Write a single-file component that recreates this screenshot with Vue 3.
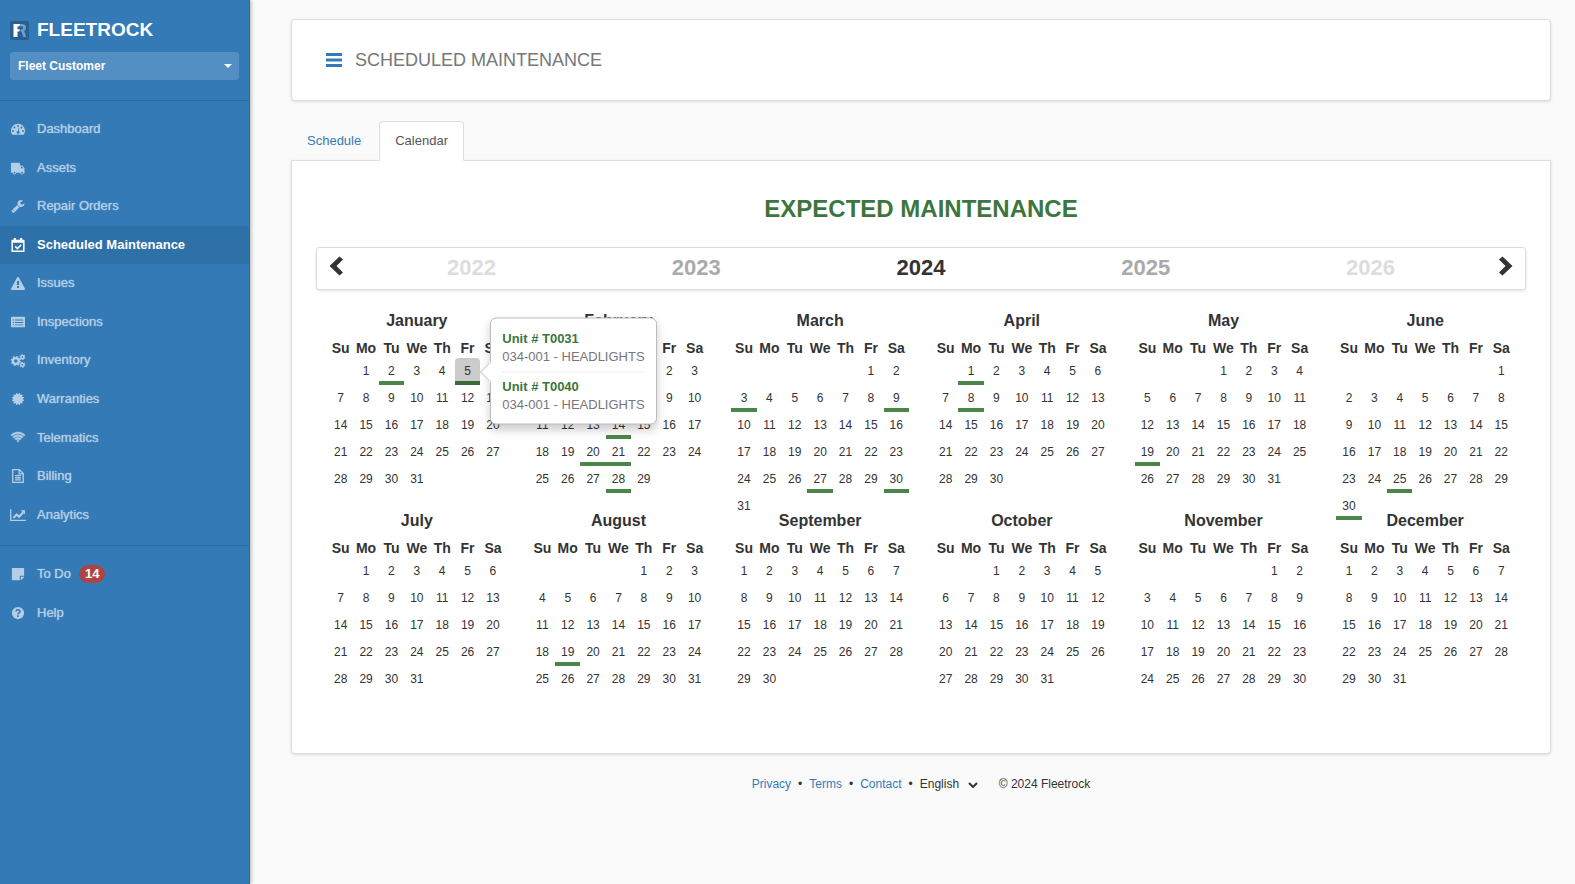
<template>
  <div class="app">
    <aside class="sidebar">
      <div class="brand">
        <svg class="logo" viewBox="0 0 19 19" aria-hidden="true">
          <rect width="19" height="19" rx="2" fill="#29608f" />
          <path d="M9 3h3q4 0 4 3.700 0 2.300-1.800 3.200l2 6.100h-2.900l-1.800-5.500h-1v-2h1q1.500 0 1.500-1.600t-1.500-1.600h-2.500z" fill="#6ba0d0" />
          <path d="M3.500 3h6.500l-1 2.500h-1.500v2.700h2.500l-.8 2.300h-1.700v5.500h-4z" fill="#fff" />
        </svg>
        <span>FLEETROCK</span>
      </div>
      <div class="customer">
        <select v-model="customer" aria-label="Customer">
          <option>Fleet Customer</option>
        </select>
        <svg class="caret" viewBox="0 0 8 4" aria-hidden="true"><path d="M0 0h8l-4 4z" fill="#fff" /></svg>
      </div>

      <nav v-for="(group, i) in menu" :key="i" class="menu">
        <a
          v-for="item in group"
          :key="item.label"
          href="#"
          :class="{ active: item.active }"
        >
          <svg class="icon" viewBox="0 0 16 16" aria-hidden="true" v-html="icons[item.icon]"></svg>
          <span>{{ item.label }}</span>
          <span v-if="item.badge" class="badge">{{ item.badge }}</span>
        </a>
      </nav>
    </aside>

    <main class="content">
      <header class="page-header">
        <button class="toggle" aria-label="Toggle menu">
          <svg viewBox="0 0 16 14" aria-hidden="true"><path d="M0 0h16v3h-16zM0 5.500h16v3h-16zM0 11h16v3h-16z" fill="#337ab7" /></svg>
        </button>
        <h1>SCHEDULED MAINTENANCE</h1>
      </header>

      <div class="tabs">
        <a href="#">Schedule</a>
        <a href="#" class="active">Calendar</a>
      </div>

      <section class="panel">
        <h2>EXPECTED MAINTENANCE</h2>

        <div class="years">
          <button class="arrow" aria-label="Previous year" @click="year--">
            <svg viewBox="0 0 14 20" aria-hidden="true"><path d="M10.500 0.500l3.500 3-6.500 6.500 6.500 6.500-3.500 3-10-9.500z" fill="#333" /></svg>
          </button>
          <button
            v-for="y in years"
            :key="y"
            class="year"
            :class="'away-' + Math.abs(y - year)"
            @click="year = y"
          >{{ y }}</button>
          <button class="arrow next" aria-label="Next year" @click="year++">
            <svg viewBox="0 0 14 20" aria-hidden="true"><path d="M3.500 0.500l-3.500 3 6.500 6.500-6.500 6.500 3.500 3 10-9.500z" fill="#333" /></svg>
          </button>
        </div>

        <div class="months">
          <div v-for="month in months" :key="month.name" class="month">
            <h3>{{ month.name }}</h3>
            <table>
              <thead>
                <tr>
                  <th v-for="d in weekdays" :key="d">{{ d }}</th>
                </tr>
              </thead>
              <tbody>
                <tr v-for="(week, w) in month.weeks" :key="w">
                  <td
                    v-for="(day, d) in week"
                    :key="d"
                    :class="{ due: day.due, selected: day.open }"
                  >
                    {{ day.date }}
                    <div v-if="day.open" class="popover">
                      <div v-for="u in units" :key="u.unit" class="unit">
                        <strong>Unit # {{ u.unit }}</strong>
                        <span>{{ u.task }}</span>
                      </div>
                    </div>
                  </td>
                </tr>
              </tbody>
            </table>
          </div>
        </div>
      </section>

      <footer class="footer">
        <a href="#">Privacy</a>
        <span>•</span>
        <a href="#">Terms</a>
        <span>•</span>
        <a href="#">Contact</a>
        <span>•</span>
        <div class="language">
          <select v-model="language" aria-label="Language">
            <option>English</option>
          </select>
          <svg viewBox="0 0 10 6" aria-hidden="true"><path d="M1 1l4 4 4-4" fill="none" stroke="#333" stroke-width="2" /></svg>
        </div>
        <span class="copyright">© 2024 Fleetrock</span>
      </footer>
    </main>
  </div>
</template>

<script setup>
import { ref, computed } from 'vue'

const customer = ref('Fleet Customer')
const language = ref('English')
const year = ref(2024)

const menu = [
  [
    { label: 'Dashboard', icon: 'dashboard' },
    { label: 'Assets', icon: 'truck' },
    { label: 'Repair Orders', icon: 'wrench' },
    { label: 'Scheduled Maintenance', icon: 'calendar', active: true },
    { label: 'Issues', icon: 'warning' },
    { label: 'Inspections', icon: 'list' },
    { label: 'Inventory', icon: 'cogs' },
    { label: 'Warranties', icon: 'certificate' },
    { label: 'Telematics', icon: 'wifi' },
    { label: 'Billing', icon: 'file' },
    { label: 'Analytics', icon: 'chart' }
  ],
  [
    { label: 'To Do', icon: 'note', badge: 14 },
    { label: 'Help', icon: 'help' }
  ]
]

const icons = {
  dashboard: '<path fill="currentColor" fill-rule="evenodd" d="M8 2a8 8 0 0 0-8 8q0 2.400 1.300 4.300.2.300.5.300h12.400q.3 0 .5-.3Q16 12.400 16 10a8 8 0 0 0-8-8zM2.300 9.100a1.100 1.100 0 1 1 0 2.200 1.100 1.100 0 0 1 0-2.200zM4 5.100a1.100 1.100 0 1 1 0 2.200 1.100 1.100 0 0 1 0-2.200zM8 3.400a1.100 1.100 0 1 1 0 2.200 1.100 1.100 0 0 1 0-2.200zM12 5.100a1.100 1.100 0 1 1 0 2.200 1.100 1.100 0 0 1 0-2.200zM13.700 9.100a1.100 1.100 0 1 1 0 2.200 1.100 1.100 0 0 1 0-2.200zM9 6.500l.8.200-.9 3.700a1.700 1.700 0 1 1-1-.2z"/>',
  truck: '<path fill="currentColor" fill-rule="evenodd" d="M.5 2h9.300q.5 0 .5.500v2.500h2q.4 0 .7.300l2.100 2.300q.3.300.3.700v4.200h.4v1h-1.300a2 2 0 0 1-4 0H6a2 2 0 0 1-4 0H0V2.500Q0 2 .5 2zM11.300 6.200v2.200h2.800v-.2l-1.900-2zM4 12.400a1 1 0 1 0 0 2 1 1 0 0 0 0-2zM12.500 12.400a1 1 0 1 0 0 2 1 1 0 0 0 0-2z"/>',
  wrench: '<g transform="scale(.00893)"><path fill="currentColor" d="M448 1472q0-26-19-45t-45-19-45 19-19 45 19 45 45 19 45-19 19-45zm644-420l-682 682q-37 37-90 37-52 0-91-37l-106-108q-38-36-38-90 0-53 38-91l681-681q39 98 114.500 173.500t173.500 114.500zm634-435q0 39-23 106-47 134-164.500 217.500t-258.500 83.500q-185 0-316.500-131.500t-131.500-316.500 131.500-316.500 316.500-131.500q58 0 121.500 16.500t107.500 46.500q16 11 16 28t-16 28l-293 169v224l193 107q5-3 79-48.500t135.500-81 70.500-35.500q15 0 23.500 10t8.500 25z"/></g>',
  calendar: '<path fill="currentColor" fill-rule="evenodd" d="M1.500 2H3V1q0-1 1-1h.8q1 0 1 1v1h4.400V1q0-1 1-1h.8q1 0 1 1v1h1.500q1 0 1 1v12q0 1-1 1h-13q-1 0-1-1V3q0-1 1-1zM2.200 5.500v8.900h11.600V5.500z"/><path d="M4.800 9.600l2.500 2.500 4.200-4.200" fill="none" stroke="currentColor" stroke-width="1.800"/>',
  warning: '<g transform="scale(.00893)"><path fill="currentColor" d="M1024 1375v-190q0-14-9.500-23.500t-22.500-9.500h-192q-13 0-22.500 9.500t-9.500 23.500v190q0 14 9.500 23.500t22.500 9.500h192q13 0 22.500-9.500t9.500-23.500zm-2-374l18-459q0-12-10-19-13-11-24-11h-220q-11 0-24 11-10 7-10 21l17 457q0 10 10 16.500t24 6.500h185q14 0 23.500-6.500t10.500-16.500zm-14-934l768 1408q35 63-2 126-17 29-46.500 46t-63.500 17h-1536q-34 0-63.500-17t-46.500-46q-37-63-2-126l768-1408q17-31 47-49t65-18 65 18 47 49z"/></g>',
  list: '<path fill="currentColor" fill-rule="evenodd" d="M1 2h14q1 0 1 1v10q0 1-1 1H1q-1 0-1-1V3q0-1 1-1zM2 5.200v1h1.500v-1zM4.500 5.200v1H14v-1zM2 8v1h1.500V8zM4.500 8v1H14V8zM2 10.800v1h1.500v-1zM4.500 10.800v1H14v-1z"/>',
  cogs: '<g fill="none" stroke="currentColor"><circle cx="5.500" cy="8" r="3.300" stroke-width="2.800"/><circle cx="5.500" cy="8" r="5" stroke-width="1.600" stroke-dasharray="1.960 1.967"/><circle cx="13" cy="3.600" r="1.800" stroke-width="1.700"/><circle cx="13" cy="3.600" r="2.800" stroke-width="1.200" stroke-dasharray="1.450 1.482"/><circle cx="13" cy="12.400" r="1.800" stroke-width="1.700"/><circle cx="13" cy="12.400" r="2.800" stroke-width="1.200" stroke-dasharray="1.450 1.482"/></g>',
  certificate: '<g transform="scale(.00893)"><path fill="currentColor" d="M1504 896l138 135q30 28 20 70-12 41-52 51l-188 48 53 186q12 41-19 70-29 31-70 19l-186-53-48 188q-10 40-51 52-12 2-19 2-31 0-51-22l-135-138-135 138q-28 30-70 20-41-11-51-52l-48-188-186 53q-41 12-70-19-31-29-19-70l53-186-188-48q-40-10-52-51-10-42 20-70l138-135-138-135q-30-28-20-70 12-41 52-51l188-48-53-186q-12-41 19-70 29-31 70-19l186 53 48-188q10-41 51-51 41-12 70 19l135 139 135-139q29-30 70-19 41 10 51 51l48 188 186-53q41-12 70 19 31 29 19 70l-53 186 188 48q40 10 52 51 10 42-20 70z"/></g>',
  wifi: '<g transform="translate(-.5 0) scale(.0083)"><path fill="currentColor" stroke="currentColor" stroke-width="50" d="M1024 1523q-20 0-93-73.500t-73-93.500q0-32 62.500-54t103.500-22 103.500 22 62.500 54q0 20-73 93.500t-93 73.500zm270-271q-2 0-40-25t-101.500-50-128.500-25-128.500 25-101 50-40.500 25q-18 0-93.500-75t-75.500-93q0-13 10-23 78-77 196-121t233-44 233 44 196 121q10 10 10 23 0 18-75.500 93t-93.500 75zm273-272q-11 0-23-8-136-105-252-154.500t-268-49.500q-85 0-170.500 22t-149 53-113.500 62-79 53-31 22q-17 0-92-75t-75-93q0-12 10-22 132-132 320-205t380-73 380 73 320 205q10 10 10 22 0 18-75 93t-92 75zm271-271q-11 0-22-9-179-157-371.500-236.500t-420.500-79.500-420.500 79.500-371.500 236.500q-11 9-22 9-17 0-92.500-75t-75.500-93q0-13 10-23 187-186 445-288t527-102 527 102 445 288q10 10 10 23 0 18-75.500 93t-92.500 75z"/></g>',
  file: '<path d="M2 .7h7.500l4.500 4.500v10.100H2zM9.300.7v4.800H14M4.700 7.500h6.600M4.700 10h6.600M4.700 12.500h6.600" fill="none" stroke="currentColor" stroke-width="1.500"/>',
  chart: '<path d="M-.3 1.500v12.700H17" fill="none" stroke="currentColor" stroke-width="1.500"/><path d="M2.800 11.500l3.700-4 2.700 2.500 4.600-4.800" fill="none" stroke="currentColor" stroke-width="2.400"/><path d="M11 2.500h5v5z" fill="currentColor"/>',
  note: '<path fill="currentColor" d="M1.700 1h12.600q.7 0 .7.700V10h-4q-1 0-1 1v4H1.700q-.7 0-.7-.7V1.700q0-.7.7-.7zM11.200 11.200H15q-.1.600-.5 1L12.200 14.500q-.4.400-1 .5z"/>',
  help: '<circle cx="8" cy="8" r="7" fill="currentColor"/><path d="M5.700 6.300Q5.900 4.300 8 4.300t2.300 1.800q0 1-1.200 1.700T8 9.600" fill="none" stroke="#337ab7" stroke-width="1.800"/><path d="M7.100 10.700h1.800v1.800h-1.800z" fill="#337ab7"/>'
}

const weekdays = ['Su', 'Mo', 'Tu', 'We', 'Th', 'Fr', 'Sa']
const monthNames = [
  'January', 'February', 'March', 'April', 'May', 'June',
  'July', 'August', 'September', 'October', 'November', 'December'
]

// expected maintenance dates, by year and month index
const dueDates = {
  2024: {
    0: [2, 5],
    1: [14, 20, 21, 28],
    2: [3, 9, 27, 30],
    3: [1, 8],
    4: [19],
    5: [25, 30],
    7: [19]
  }
}

const units = [
  { unit: 'T0031', task: '034-001 - HEADLIGHTS' },
  { unit: 'T0040', task: '034-001 - HEADLIGHTS' }
]

const years = computed(() => [-2, -1, 0, 1, 2].map((n) => year.value + n))

const months = computed(() =>
  monthNames.map((name, m) => {
    const first = new Date(year.value, m, 1).getDay()
    const total = new Date(year.value, m + 1, 0).getDate()
    const due = dueDates[year.value]?.[m] || []
    const weeks = []
    for (let start = 1 - first; start <= total; start += 7) {
      const week = []
      for (let d = start; d < start + 7; d++) {
        const valid = d >= 1 && d <= total
        week.push({
          date: valid ? d : '',
          due: valid && due.includes(d),
          open: year.value === 2024 && m === 0 && d === 5
        })
      }
      weeks.push(week)
    }
    return { name, weeks }
  })
)
</script>

<style>
body {
  margin: 0;
  background: #fafafa;
}
</style>

<style scoped>
* {
  box-sizing: border-box;
}

.app {
  display: flex;
  min-height: 100vh;
  font-family: "Liberation Sans", Arial, sans-serif;
  font-size: 13px;
  line-height: 1.42857;
  color: #333;
}

a {
  color: #337ab7;
  text-decoration: none;
}

button,
select {
  font: inherit;
  color: inherit;
  background: none;
  border: none;
  padding: 0;
  cursor: pointer;
}

.sidebar {
  flex: 0 0 250px;
  background: #337ab7;
  border-right: 1px solid #2c6ba1;
  box-shadow: 1px 0 4px rgba(0, 0, 0, 0.3);
}

.brand {
  display: flex;
  align-items: center;
  gap: 8px;
  height: 32px;
  margin: 14px 10px 6px;
  color: #fff;
  font-size: 19px;
  font-weight: bold;
}

.logo {
  width: 19px;
  height: 19px;
}

.customer {
  position: relative;
  margin: 0 10px 20px;
}

.customer select {
  display: block;
  appearance: none;
  width: 100%;
  height: 28px;
  padding: 2px 8px 0;
  border-radius: 3px;
  background: rgba(255, 255, 255, 0.16);
  color: #fff;
  font-size: 12px;
  font-weight: bold;
}

.customer option {
  color: #333;
}

.caret {
  position: absolute;
  top: 12px;
  right: 7px;
  width: 8px;
  height: 4px;
  pointer-events: none;
}

.menu {
  padding: 9px 0 11px;
  border-top: 1px solid #2d6da5;
}

.menu a {
  display: flex;
  align-items: center;
  gap: 12px;
  padding: 10px 11px;
  color: #b3cee5;
  text-shadow: 0 0 1px #b3cee5;
}

.menu a.active {
  background: #2e70a8;
  color: #fff;
  font-weight: bold;
  text-shadow: none;
}

.icon {
  width: 14px;
  height: 14px;
  overflow: visible;
}

.badge {
  margin: 0 -4px;
  padding: 0 6px;
  border-radius: 9px;
  background: #ae4345;
  color: #fff;
  font-weight: bold;
  line-height: 18px;
  text-shadow: none;
}

.content {
  flex: 1;
  min-width: 0;
  padding: 19px 24px 20px 41px;
}

.page-header {
  display: flex;
  align-items: center;
  gap: 13px;
  height: 82px;
  padding: 0 34px;
  background: #fff;
  border: 1px solid #ddd;
  border-radius: 4px;
  box-shadow: 0 1px 3px rgba(0, 0, 0, 0.12);
}

.toggle {
  display: flex;
}

.toggle svg {
  width: 16px;
  height: 14px;
}

h1 {
  margin: 0;
  color: #777;
  font-size: 18px;
  font-weight: normal;
  line-height: 28px;
}

.tabs {
  display: flex;
  gap: 2px;
  margin-top: 20px;
}

.tabs a {
  position: relative;
  margin-bottom: -1px;
  padding: 10px 15px 9px;
  border: 1px solid transparent;
  border-radius: 4px 4px 0 0;
}

.tabs a.active {
  background: #fff;
  border-color: #ddd #ddd #fff;
  color: #555;
  z-index: 1;
}

.panel {
  padding: 24px 24px 53px;
  background: #fff;
  border: 1px solid #ddd;
  border-radius: 0 0 4px 4px;
  box-shadow: 0 1px 3px rgba(0, 0, 0, 0.12);
}

h2 {
  margin: 6px 0 20px;
  color: #3c763d;
  font-size: 24px;
  line-height: 36px;
  text-align: center;
}

.years {
  display: flex;
  height: 43px;
  border: 1px solid #ddd;
  border-radius: 3px;
  box-shadow: 0 1px 3px rgba(0, 0, 0, 0.12);
}

.arrow {
  display: flex;
  align-items: center;
  width: 42px;
  padding: 0 12px 4px;
}

.arrow.next {
  justify-content: flex-end;
}

.arrow svg {
  width: 14px;
  height: 20px;
}

.year {
  flex: 1;
  font-size: 22px;
  font-weight: bold;
}

.away-1 {
  color: #aaa;
}

.away-2 {
  color: #ddd;
}

.months {
  display: grid;
  grid-template-columns: repeat(6, 1fr);
  grid-auto-rows: 200px;
  margin-top: 10px;
}

.month {
  padding: 0 12px;
}

h3 {
  margin: 10px 0 6px;
  font-size: 16px;
  line-height: 22px;
  text-align: center;
}

table {
  width: 100%;
  table-layout: fixed;
  border-collapse: collapse;
}

th {
  padding: 0;
  font-size: 14px;
  line-height: 20px;
}

td {
  position: relative;
  height: 27px;
  padding: 0;
  font-size: 12px;
  line-height: 27px;
  text-align: center;
}

.due {
  box-shadow: inset 0 -4px #4a864a;
}

.selected {
  border-radius: 4px 4px 0 0;
  background: #cbcbcb;
  box-shadow: inset 0 -4px #3b6b3b;
}

.popover {
  position: absolute;
  top: 50%;
  left: 100%;
  z-index: 10;
  margin-left: 10px;
  padding: 11px 11px 4px;
  transform: translateY(-50%);
  background: #fff;
  border: 1px solid #bbb;
  border-radius: 6px;
  box-shadow: 0 5px 10px rgba(0, 0, 0, 0.2);
  font-size: 13px;
  line-height: 18px;
  text-align: left;
  white-space: nowrap;
}

.popover::before {
  content: "";
  position: absolute;
  top: 50%;
  left: -8px;
  width: 14px;
  height: 14px;
  margin-top: -7px;
  transform: rotate(45deg);
  background: #fff;
  border: 1px solid #ccc;
  border-width: 0 0 1px 1px;
}

.unit {
  position: relative;
  display: flex;
  flex-direction: column;
  padding-bottom: 6px;
}

.unit + .unit {
  padding-top: 5px;
  border-top: 1px solid #eee;
}

.unit strong {
  color: #3c763d;
}

.unit span {
  color: #777;
}

.footer {
  display: flex;
  align-items: center;
  justify-content: center;
  gap: 7px;
  margin-top: 20px;
  font-size: 12px;
  line-height: 20px;
}

.language {
  position: relative;
}

.language select {
  display: block;
  appearance: none;
  width: 58px;
  height: 20px;
}

.language svg {
  position: absolute;
  top: 8px;
  right: 0;
  width: 10px;
  height: 6px;
  pointer-events: none;
}

.copyright {
  margin-left: 14px;
}
</style>
